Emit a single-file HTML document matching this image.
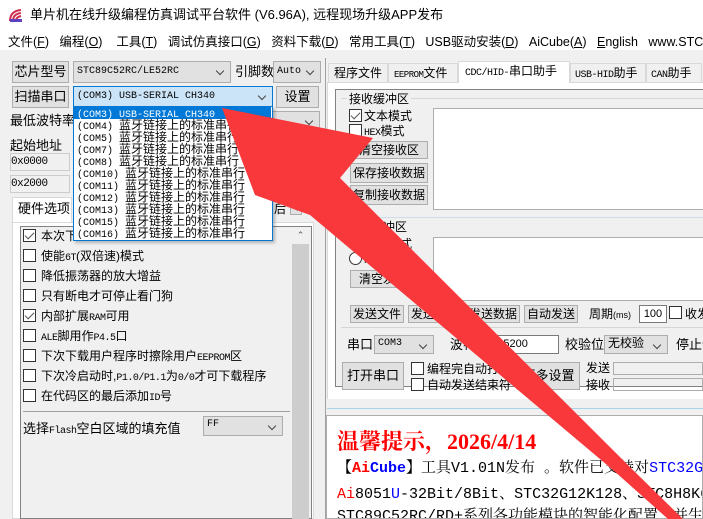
<!DOCTYPE html>
<html><head><meta charset="utf-8"><style>
*{margin:0;padding:0;box-sizing:border-box}
html,body{overflow:hidden}
body{width:703px;height:519px;background:#f0f0f0;position:relative;font-family:"Liberation Sans","Noto Sans CJK SC",sans-serif;font-size:12px;line-height:14px;color:#000}
.a{position:absolute;white-space:nowrap}
.btn{position:absolute;background:#e1e1e1;border:1px solid #adadad;text-align:center;font-size:12px;white-space:nowrap}
.cb{position:absolute;background:#e1e1e1;border:1px solid #adadad;font-family:"Liberation Mono","Noto Sans CJK SC",monospace;font-size:10px;padding-left:3px;white-space:nowrap}
.cb::after{content:"";position:absolute;right:7px;top:6px;width:5px;height:5px;border-right:1px solid #444;border-bottom:1px solid #444;transform:rotate(45deg)}
.chk{position:absolute;width:13px;height:13px;border:1px solid #333;background:#fff}
.chk.on::after{content:"";position:absolute;left:3px;top:0px;width:4px;height:8px;border-right:1.5px solid #555;border-bottom:1.5px solid #555;transform:rotate(45deg)}
.m{font-family:"Liberation Mono",monospace;font-size:10px;letter-spacing:-0.5px}
.item{position:absolute;left:0;width:197px;height:12px;line-height:12px;font-size:12px;padding-left:3px}
.item .m{font-size:10px;letter-spacing:0}
</style></head><body>
<div class="a" style="left:0;top:0;width:703px;height:30px;background:#fff"></div>
<svg class="a" style="left:8px;top:7px" width="16" height="16"><path d="M2 14 Q2 4 13 3" stroke="#d03050" stroke-width="2" fill="none"/><path d="M5 14 Q5 7 13 6" stroke="#d03050" stroke-width="2" fill="none"/><path d="M8 14 Q8 10 13 9" stroke="#d03050" stroke-width="2" fill="none"/><rect x="2" y="12" width="12" height="3" fill="#6040c0"/></svg>
<div class="a" style="left:30px;top:8px;font-size:13px">单片机在线升级编程仿真调试平台软件 (V6.96A), 远程现场升级APP发布</div>
<div class="a" style="left:0;top:30px;width:703px;height:20px;background:#fff"></div>
<div class="a" style="left:8px;top:35px;font-size:12.5px;width:695px;overflow:hidden">文件(<u>F</u>)&nbsp;&nbsp;&nbsp;编程(<u>O</u>)&nbsp;&nbsp;&nbsp;&nbsp;工具(<u>T</u>)&nbsp;&nbsp;&nbsp;调试仿真接口(<u>G</u>)&nbsp;&nbsp;&nbsp;资料下载(<u>D</u>)&nbsp;&nbsp;&nbsp;常用工具(<u>T</u>)&nbsp;&nbsp;&nbsp;USB驱动安装(<u>D</u>)&nbsp;&nbsp;&nbsp;AiCube(<u>A</u>)&nbsp;&nbsp;&nbsp;<u>E</u>nglish&nbsp;&nbsp;&nbsp;www.STC</div>

<div class="btn" style="left:12px;top:61px;width:57px;height:22px;line-height:20px;font-size:13px">芯片型号</div>
<div class="cb" style="left:73px;top:61px;width:158px;height:22px;line-height:20px">STC89C52RC/LE52RC</div>
<div class="a" style="left:235px;top:65px;font-size:13px">引脚数</div>
<div class="cb" style="left:273px;top:61px;width:48px;height:22px;line-height:20px">Auto</div>
<div class="btn" style="left:12px;top:86px;width:57px;height:22px;line-height:20px;font-size:13px">扫描串口</div>
<div class="cb" style="left:73px;top:86px;width:200px;height:21px;line-height:19px;background:#cce4f7;border-color:#0078d7">(COM3) USB-SERIAL CH340</div>
<div class="btn" style="left:276px;top:86px;width:43px;height:22px;line-height:20px;font-size:13px">设置</div>
<div class="a" style="left:10px;top:114px;font-size:13px">最低波特率</div>
<div class="cb" style="left:272px;top:111px;width:48px;height:22px"></div>
<div class="a" style="left:10px;top:139px;font-size:13px">起始地址</div>
<div class="a m" style="left:10px;top:153px;width:60px;height:18px;border:1px solid #ccc;line-height:16px;font-size:11px">0x0000</div>
<div class="a m" style="left:10px;top:175px;width:60px;height:18px;border:1px solid #ccc;line-height:16px;font-size:11px">0x2000</div>
<div class="btn" style="left:272px;top:148px;width:48px;height:22px"></div>
<div class="btn" style="left:290px;top:203px;width:12px;height:12px;font-size:8px;line-height:10px">◂</div>
<div class="a" style="left:274px;top:202px">后</div>

<div class="a" style="left:12px;top:197px;width:60px;height:26px;background:#fff;border:1px solid #d9d9d9;border-bottom:none"></div>
<div class="a" style="left:18px;top:202px;font-size:13px">硬件选项</div>
<div class="a" style="left:12px;top:222px;width:302px;height:297px;background:#fff;border:1px solid #d9d9d9"></div>
<div class="a" style="left:20px;top:226px;width:292px;height:293px;background:#f0f0f0;border:1px solid #828282"></div>
<div class="a" style="left:292px;top:227px;width:17px;height:292px;background:#cdcdcd"></div>
<div class="a" style="left:292px;top:227px;width:17px;height:17px;background:#f0f0f0;font-size:9px;text-align:center;line-height:17px;color:#555">⌃</div>
<div class="chk on" style="left:23px;top:229px"></div><div class="a" style="left:41px;top:229px">本次下</div>
<div class="chk" style="left:23px;top:249px"></div><div class="a" style="left:41px;top:249px">使能<span class="m">6T</span>(双倍速)模式</div>
<div class="chk" style="left:23px;top:269px"></div><div class="a" style="left:41px;top:269px">降低振荡器的放大增益</div>
<div class="chk" style="left:23px;top:289px"></div><div class="a" style="left:41px;top:289px">只有断电才可停止看门狗</div>
<div class="chk on" style="left:23px;top:309px"></div><div class="a" style="left:41px;top:309px">内部扩展<span class="m">RAM</span>可用</div>
<div class="chk" style="left:23px;top:329px"></div><div class="a" style="left:41px;top:329px"><span class="m">ALE</span>脚用作<span class="m">P4.5</span>口</div>
<div class="chk" style="left:23px;top:349px"></div><div class="a" style="left:41px;top:349px">下次下载用户程序时擦除用户<span class="m">EEPROM</span>区</div>
<div class="chk" style="left:23px;top:369px"></div><div class="a" style="left:41px;top:369px">下次冷启动时,<span class="m">P1.0/P1.1</span>为<span class="m">0/0</span>才可下载程序</div>
<div class="chk" style="left:23px;top:389px"></div><div class="a" style="left:41px;top:389px">在代码区的最后添加<span class="m">ID</span>号</div>
<div class="a" style="left:23px;top:411px;width:267px;height:1px;background:#a0a0a0"></div>
<div class="a" style="left:23px;top:422px;font-size:13px">选择<span class="m">Flash</span>空白区域的填充值</div>
<div class="cb" style="left:203px;top:416px;width:80px;height:20px;line-height:16px">FF</div>

<div class="a" style="left:73px;top:106px;width:200px;height:135px;background:#fff;border:1px solid #0078d7;box-shadow:2px 2px 3px rgba(0,0,0,.25);overflow:hidden">
<div class="item" style="top:0;background:#0078d7;color:#fff"><span class="m">(COM3) USB-SERIAL CH340</span></div>
<div class="item" style="top:12px"><span class="m">(COM4) </span>蓝牙链接上的标准串行</div>
<div class="item" style="top:24px"><span class="m">(COM5) </span>蓝牙链接上的标准串行</div>
<div class="item" style="top:36px"><span class="m">(COM7) </span>蓝牙链接上的标准串行</div>
<div class="item" style="top:48px"><span class="m">(COM8) </span>蓝牙链接上的标准串行</div>
<div class="item" style="top:60px"><span class="m">(COM10) </span>蓝牙链接上的标准串行</div>
<div class="item" style="top:72px"><span class="m">(COM11) </span>蓝牙链接上的标准串行</div>
<div class="item" style="top:84px"><span class="m">(COM12) </span>蓝牙链接上的标准串行</div>
<div class="item" style="top:96px"><span class="m">(COM13) </span>蓝牙链接上的标准串行</div>
<div class="item" style="top:108px"><span class="m">(COM15) </span>蓝牙链接上的标准串行</div>
<div class="item" style="top:120px"><span class="m">(COM16) </span>蓝牙链接上的标准串行</div>
</div>

<div class="a" style="left:325px;top:58px;width:1px;height:461px;background:#a0a0a0"></div>
<div class="a" style="left:327px;top:62px;width:376px;height:21px;border-bottom:1px solid #d9d9d9"></div>
<div class="a" style="left:328px;top:63px;width:60px;height:20px;border:1px solid #d9d9d9;padding-left:5px;line-height:18px">程序文件</div>
<div class="a" style="left:388px;top:63px;width:70px;height:20px;border:1px solid #d9d9d9;padding-left:5px;line-height:18px"><span class="m" style="font-size:9px">EEPROM</span>文件</div>
<div class="a" style="left:458px;top:61px;width:112px;height:23px;border:1px solid #d9d9d9;border-bottom:none;background:#fff;padding-left:6px;line-height:18px"><span class="m">CDC/HID-</span>串口助手</div>
<div class="a" style="left:570px;top:63px;width:76px;height:20px;border:1px solid #d9d9d9;padding-left:4px;line-height:18px"><span class="m">USB-HID</span>助手</div>
<div class="a" style="left:646px;top:63px;width:56px;height:20px;border:1px solid #d9d9d9;padding-left:4px;line-height:18px"><span class="m">CAN</span>助手</div>
<div class="a" style="left:327px;top:83px;width:376px;height:316px;background:#fff;border-left:1px solid #d9d9d9"></div>
<div class="a" style="left:335px;top:89px;width:368px;height:298px;background:#f0f0f0;border:1px solid #828282;border-right:none"></div>
<div class="a" style="left:341px;top:98px;width:362px;height:1px;background:#d5d5d5"></div>
<div class="a" style="left:347px;top:92px;background:#f0f0f0;padding:0 2px">接收缓冲区</div>
<div class="chk on" style="left:349px;top:109px"></div><div class="a" style="left:364px;top:109px">文本模式</div>
<div class="chk" style="left:349px;top:124px"></div><div class="a" style="left:364px;top:124px"><span class="m">HEX</span>模式</div>
<div class="btn" style="left:350px;top:141px;width:78px;height:18px;line-height:16px">清空接收区</div>
<div class="btn" style="left:350px;top:163px;width:78px;height:20px;line-height:18px">保存接收数据</div>
<div class="btn" style="left:350px;top:185px;width:78px;height:20px;line-height:18px">复制接收数据</div>
<div class="a" style="left:433px;top:108px;width:270px;height:102px;background:#fff;border:1px solid #adadad;border-right:none"></div>
<div class="a" style="left:341px;top:217px;width:362px;height:1px;background:#cde"></div>
<div class="a" style="left:347px;top:220px">发送缓冲区</div>
<div class="a" style="left:364px;top:237px">文本模式</div>
<div class="a" style="left:349px;top:252px;width:13px;height:13px;border:1px solid #333;border-radius:50%;background:#fff"></div>
<div class="a" style="left:364px;top:252px"><span class="m">HEX</span>模式</div>
<div class="btn" style="left:350px;top:270px;width:78px;height:18px;line-height:16px">清空发送区</div>
<div class="a" style="left:433px;top:237px;width:270px;height:64px;background:#fff;border:1px solid #adadad;border-right:none"></div>
<div class="btn" style="left:350px;top:305px;width:54px;height:18px;line-height:16px">发送文件</div>
<div class="btn" style="left:408px;top:305px;width:54px;height:18px;line-height:16px">发送回车</div>
<div class="btn" style="left:466px;top:305px;width:54px;height:18px;line-height:16px">发送数据</div>
<div class="btn" style="left:524px;top:305px;width:54px;height:18px;line-height:16px">自动发送</div>
<div class="a" style="left:589px;top:307px">周期<span style="font-size:9px">(ms)</span></div>
<div class="a" style="left:639px;top:305px;width:28px;height:18px;background:#fff;border:1px solid #7a7a7a;font-size:11px;text-align:center;line-height:16px">100</div>
<div class="chk" style="left:669px;top:306px"></div><div class="a" style="left:685px;top:307px;width:18px;overflow:hidden">收发</div>
<div class="a" style="left:341px;top:327px;width:362px;height:1px;background:#d5d5d5"></div>
<div class="a" style="left:347px;top:338px;font-size:13px">串口</div>
<div class="cb" style="left:374px;top:335px;width:60px;height:19px;line-height:15px">COM3</div>
<div class="a" style="left:450px;top:338px;font-size:13px">波特率</div>
<div class="a" style="left:489px;top:335px;width:70px;height:19px;background:#fff;border:1px solid #7a7a7a;font-size:11px;line-height:17px;padding-left:2px">115200</div>
<div class="a" style="left:565px;top:338px;font-size:13px">校验位</div>
<div class="cb" style="left:604px;top:335px;width:64px;height:19px;line-height:15px;font-size:12px;font-family:'Liberation Sans','Noto Sans CJK SC',sans-serif">无校验</div>
<div class="a" style="left:676px;top:338px;font-size:13px;width:27px;overflow:hidden">停止位</div>
<div class="btn" style="left:342px;top:362px;width:62px;height:28px;line-height:26px;font-size:13px">打开串口</div>
<div class="chk" style="left:411px;top:362px"></div><div class="a" style="left:427px;top:362px">编程完自动打开串口</div>
<div class="chk" style="left:411px;top:378px"></div><div class="a" style="left:427px;top:378px">自动发送结束符</div>
<div class="btn" style="left:517px;top:362px;width:63px;height:28px;line-height:26px;font-size:13px">更多设置</div>
<div class="a" style="left:586px;top:361px">发送</div>
<div class="a" style="left:586px;top:378px">接收</div>
<div class="a" style="left:613px;top:362px;width:90px;height:13px;border:1px solid #adadad"></div>
<div class="a" style="left:613px;top:378px;width:90px;height:13px;border:1px solid #adadad"></div>
<div class="a" style="left:327px;top:408px;width:376px;height:1px;background:#a8d4ea"></div>
<div class="a" style="left:326px;top:415px;width:377px;height:104px;background:#fff;border:1px solid #adadad;overflow:hidden">
<div class="a" style="left:10px;top:14px;font-family:'Liberation Serif','Noto Serif CJK SC',serif;font-size:22px;line-height:24px;color:#f00;font-weight:bold">温馨提示，2026/4/14</div>
<div class="a" style="left:10px;top:44px;font-family:'Liberation Mono','Noto Serif CJK SC',monospace;font-size:15px;line-height:17px">【<b style="color:#f00">Ai</b><b style="color:#00f">Cube</b>】工具V1.01N发布 。软件已支持对<span style="color:#00f">STC32G</span></div>
<div class="a" style="left:10px;top:70px;font-family:'Liberation Mono','Noto Serif CJK SC',monospace;font-size:15px;line-height:17px"><span style="color:#f00">Ai</span>8051<span style="color:#00f">U</span>-32Bit/8Bit、STC32G12K128、STC8H8K64U、</div>
<div class="a" style="left:10px;top:92px;font-family:'Liberation Mono','Noto Serif CJK SC',monospace;font-size:15px;line-height:17px">STC89C52RC/RD+系列各功能模块的智能化配置，并生</div>
</div>

<svg class="a" style="left:0;top:0" width="703" height="519"><polygon points="222,108 373,138 340,178 633,470 683,519 668,519 613,470 310,215 255,195" fill="#f8383a"/></svg>
</body></html>
